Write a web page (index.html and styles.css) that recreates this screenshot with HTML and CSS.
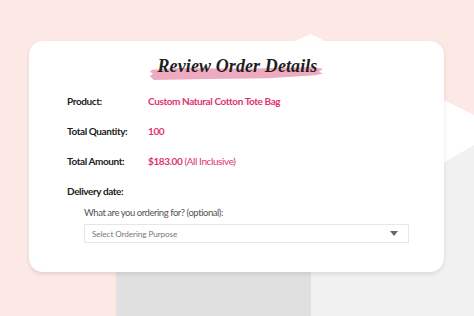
FILE: index.html
```html
<!DOCTYPE html>
<html>
<head>
<meta charset="utf-8">
<link rel="stylesheet" href="styles.css">
</head>
<body>
<div class="stage">
  <svg class="bg" width="474" height="316" viewBox="0 0 474 316">
    <rect width="474" height="316" fill="#fce8e5"/>
    <polygon points="311,34 474,115 474,316 200,316 200,80" fill="#ffffff"/>
    <polygon points="474,145 474,316 311,316 311,240" fill="#f1f1f1"/>
    <rect x="116" y="200" width="195" height="116" fill="#e0e0e0"/>
  </svg>
  <div class="card">
    <h1 class="title"><span class="brush">Review Order Details</span></h1>
    <div class="rows">
      <div class="row"><span class="label">Product:</span><span class="value">Custom Natural Cotton Tote Bag</span></div>
      <div class="row"><span class="label">Total Quantity:</span><span class="value">100</span></div>
      <div class="row"><span class="label">Total Amount:</span><span class="value">$183.00 <span class="note">(All Inclusive)</span></span></div>
      <div class="row"><span class="label">Delivery date:</span></div>
    </div>
    <div class="purpose">
      <div class="question">What are you ordering for? (optional):</div>
      <div class="select"><span>Select Ordering Purpose</span><span class="arrow"></span></div>
    </div>
  </div>
</div>
</body>
</html>
```

FILE: styles.css
```css
html, body { margin: 0; padding: 0; }
body { width: 474px; height: 316px; overflow: hidden; font-family: "Lato", "Open Sans", sans-serif; }
.stage { position: relative; width: 474px; height: 316px; padding: 41px 0 0 29px; box-sizing: border-box; }
.bg { position: absolute; left: 0; top: 0; }
.card {
  position: relative;
  width: 415px; height: 231px; box-sizing: border-box;
  background: #fff; border-radius: 14px;
  box-shadow: 0 2px 4px rgba(0,0,0,0.10);
  padding: 14px 36px 0 38px;
}
.title {
  margin: 0; text-align: center;
  font-family: "Liberation Serif", serif; font-style: italic; font-weight: bold;
  font-size: 18px; line-height: 22px; color: #1f1f1f; letter-spacing: 0.1px;
}
.brush { position: relative; display: inline-block; z-index: 0; }
.brush::before {
  content: ""; position: absolute; left: -8px; right: -6px; top: 12px; height: 13px; z-index: -1;
  background: url("data:image/svg+xml,%3Csvg xmlns='http://www.w3.org/2000/svg' viewBox='0 0 176 14' preserveAspectRatio='none'%3E%3Cpolygon points='2,3 30,1 100,2 165,0 176,2 172,5 176,7 168,9 120,12 60,13 4,14 0,10 3,7 0,5' fill='%23eeaabf'/%3E%3C/svg%3E") no-repeat;
  background-size: 100% 100%;
}
.rows { margin-top: 17px; display: flex; flex-direction: column; gap: 16px; }
.row { display: flex; font-size: 10px; line-height: 14px; letter-spacing: -0.4px; }
.label { width: 81px; flex: none; font-weight: bold; color: #222; }
.value { color: #e0336e; font-weight: bold; }
.note { font-weight: normal; }
.purpose { margin: 8px 0 0 17px; width: 325px; }
.question { font-size: 9.5px; line-height: 14px; color: #555; letter-spacing: -0.45px; }
.select {
  margin-top: 4px; height: 19px; box-sizing: border-box;
  border: 1px solid #e6e6e6; display: flex; align-items: center; justify-content: space-between;
  padding: 0 10px 0 7px; font-size: 8.2px; color: #777; letter-spacing: -0.1px;
}
.arrow { width: 0; height: 0; border-left: 4px solid transparent; border-right: 4px solid transparent; border-top: 5px solid #666; }
```
